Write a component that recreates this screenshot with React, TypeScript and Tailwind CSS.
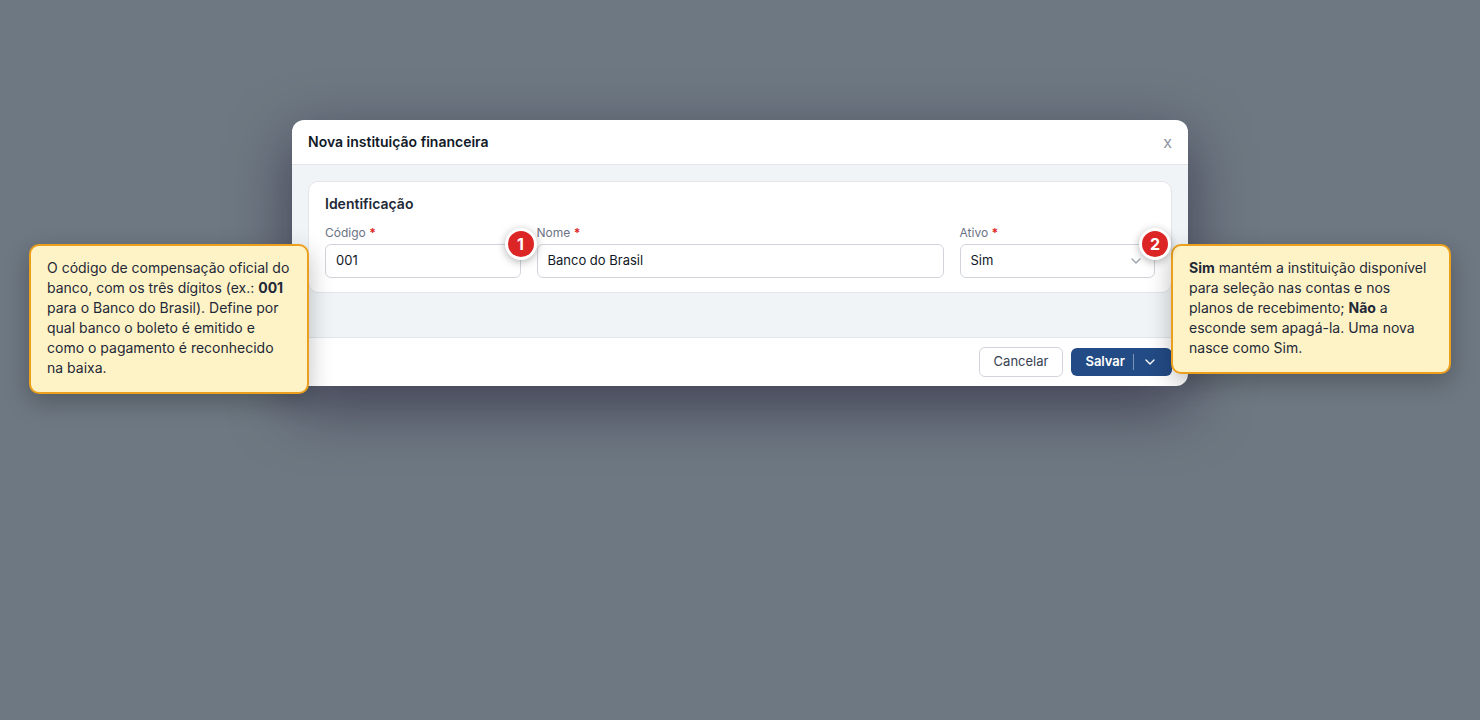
import { useState, type ReactNode } from "react";
import { ChevronDown } from "lucide-react";

type FieldProps = {
  id: string;
  label: string;
  className: string;
  children: ReactNode;
};

function Field({ id, label, className, children }: FieldProps) {
  return (
    <div className={className}>
      <label htmlFor={id} className="block text-xs leading-4 text-[#6b7386] mb-[3px]">
        {label} <span className="font-bold text-[#dc2626]">*</span>
      </label>
      <div className="relative">{children}</div>
    </div>
  );
}

function Badge({ number }: { number: number }) {
  return (
    <span className="absolute -top-4 -right-4 z-20 size-8 rounded-full border-3 border-white bg-[#dc2626] flex items-center justify-center text-base leading-4 font-bold text-white shadow-[0_2px_8px_rgba(0,0,0,0.3)]">
      {number}
    </span>
  );
}

function Callout({ side, children }: { side: "left" | "right"; children: ReactNode }) {
  return (
    <div
      className={
        "absolute top-0 z-10 w-70 rounded-[10px] border-2 border-[#eb9f1c] bg-[#fef3c7] px-4 pt-3 pb-[14px] text-sm leading-5 text-[#1f2937] shadow-[0_8px_24px_rgba(0,0,0,0.25)] " +
        (side === "left" ? "right-full mr-4" : "left-full ml-4")
      }
    >
      {children}
    </div>
  );
}

const inputClass =
  "block w-full h-[34px] rounded-md border border-[#d1d5db] bg-white px-[10px] pb-[2px] text-[13px] leading-5 text-[#111827] outline-none";

export default function App() {
  const [codigo, setCodigo] = useState("001");
  const [nome, setNome] = useState("Banco do Brasil");
  const [ativo, setAtivo] = useState("Sim");

  return (
    <div className="min-h-screen bg-[#6e7882] pt-30 font-['Inter',sans-serif]">
      <div
        role="dialog"
        aria-labelledby="dialog-title"
        className="mx-auto max-w-4xl rounded-xl bg-white shadow-[0_20px_60px_rgba(20,10,40,0.5)]"
      >
        {/* Header */}
        <div className="h-[45px] px-4 border-b border-[#e2e5ea] flex items-center justify-between">
          <h2 id="dialog-title" className="text-sm font-semibold text-[#111827]">
            Nova instituição financeira
          </h2>
          <button type="button" className="text-base text-[#8d939e]">
            x
          </button>
        </div>

        {/* Body */}
        <div className="bg-[#f0f4f7] px-4 pt-4 pb-11">
          <section className="rounded-[10px] border border-[#e2e5ea] bg-white px-4 pt-3 pb-[14px]">
            <h3 className="text-sm leading-5 font-semibold text-[#1f2937] mb-[11px]">
              Identificação
            </h3>
            <div className="grid grid-cols-12 gap-4">
              <Field id="codigo" label="Código" className="col-span-3">
                <input
                  id="codigo"
                  className={inputClass}
                  value={codigo}
                  onChange={(e) => setCodigo(e.target.value)}
                />
                <Badge number={1} />
                <Callout side="left">
                  O código de compensação oficial do banco, com os três dígitos (ex.:{" "}
                  <strong>001</strong> para o Banco do Brasil). Define por qual banco o
                  boleto é emitido e como o pagamento é reconhecido na baixa.
                </Callout>
              </Field>
              <Field id="nome" label="Nome" className="col-span-6">
                <input
                  id="nome"
                  className={inputClass}
                  value={nome}
                  onChange={(e) => setNome(e.target.value)}
                />
              </Field>
              <Field id="ativo" label="Ativo" className="col-span-3">
                <select
                  id="ativo"
                  className={inputClass + " appearance-none"}
                  value={ativo}
                  onChange={(e) => setAtivo(e.target.value)}
                >
                  <option>Sim</option>
                  <option>Não</option>
                </select>
                <ChevronDown className="absolute right-[11px] top-[9px] size-4 text-[#9ca3af] pointer-events-none" />
                <Badge number={2} />
                <Callout side="right">
                  <strong>Sim</strong> mantém a instituição disponível para seleção nas
                  contas e nos planos de recebimento; <strong>Não</strong> a esconde sem
                  apagá-la. Uma nova nasce como Sim.
                </Callout>
              </Field>
            </div>
          </section>
        </div>

        {/* Footer */}
        <div className="h-[49px] px-4 border-t border-[#e2e5ea] flex items-center justify-end gap-2 text-[13px] leading-5">
          <button
            type="button"
            className="h-[30px] px-[14px] pb-[2px] rounded-md border border-[#d1d5db] bg-white text-[#374151]"
          >
            Cancelar
          </button>
          <div className="h-7 rounded-md bg-[#234b85] flex items-center text-white">
            <button type="button" className="h-full pl-[14px] pr-2 pb-[2px] font-semibold">
              Salvar
            </button>
            <span className="w-px h-4 bg-white/40" />
            <button
              type="button"
              aria-label="Mais opções"
              className="h-full pl-2 pr-[14px] flex items-center"
            >
              <ChevronDown className="size-4" />
            </button>
          </div>
        </div>
      </div>
    </div>
  );
}
